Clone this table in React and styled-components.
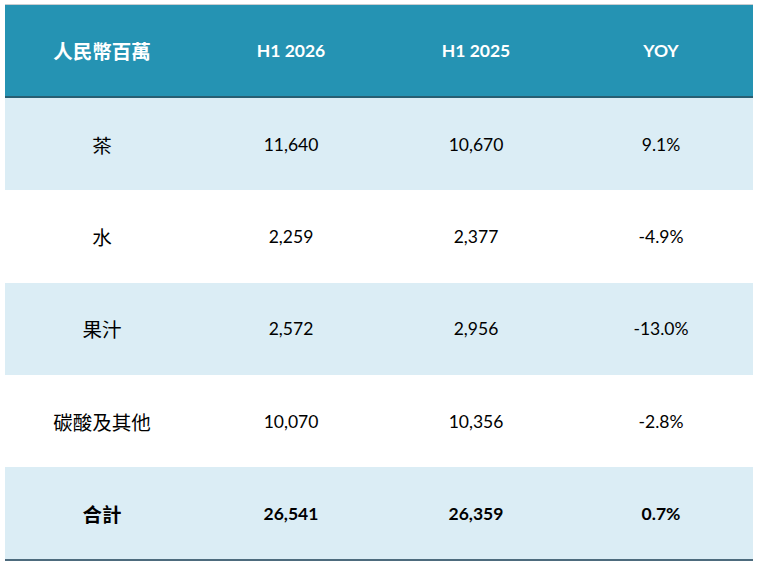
import React from "react";
import styled, { createGlobalStyle } from "styled-components";

const Global = createGlobalStyle`
  html, body { margin: 0; padding: 0; background: #ffffff; }
  body { font-family: Lato, "Noto Sans CJK TC", sans-serif; }
`;

const Page = styled.div`
  padding: 4px 0 0 5px;
`;

const Table = styled.div`
  width: 748px;
  border-top: 1px solid #c9cdd0;
  border-bottom: 2px solid #4d6b7d;
`;

const cols = "194px 184px 186px 184px";

const HeaderRow = styled.div`
  display: grid;
  grid-template-columns: ${cols};
  height: 91px;
  background: #2593b3;
  border-bottom: 2px solid #285f73;
`;

const Row = styled.div`
  display: grid;
  grid-template-columns: ${cols};
  height: 92.3px;
  background: ${(p) => (p.$shade ? "#dbedf5" : "#ffffff")};
`;

const Cell = styled.div`
  display: flex;
  align-items: center;
  justify-content: center;
  color: ${(p) => (p.$head ? "#ffffff" : "#000000")};
  font-weight: ${(p) => (p.$bold ? 700 : 400)};
  font-family: ${(p) =>
    p.$cjk
      ? '"Noto Sans CJK TC", "Noto Sans CJK SC", sans-serif'
      : 'Lato, "Noto Sans CJK TC", sans-serif'};
  font-size: ${(p) => (p.$cjk ? "19.5px" : "17.5px")};
  white-space: nowrap;
`;

const rows = [
  ["茶", "11,640", "10,670", "9.1%"],
  ["水", "2,259", "2,377", "-4.9%"],
  ["果汁", "2,572", "2,956", "-13.0%"],
  ["碳酸及其他", "10,070", "10,356", "-2.8%"],
];

export default function App() {
  return (
    <Page>
      <Global />
      <Table>
        <HeaderRow>
          <Cell $head $bold $cjk>人民幣百萬</Cell>
          <Cell $head $bold>H1 2026</Cell>
          <Cell $head $bold>H1 2025</Cell>
          <Cell $head $bold>YOY</Cell>
        </HeaderRow>
        {rows.map((r, i) => (
          <Row key={r[0]} $shade={i % 2 === 0}>
            <Cell $cjk>{r[0]}</Cell>
            <Cell>{r[1]}</Cell>
            <Cell>{r[2]}</Cell>
            <Cell>{r[3]}</Cell>
          </Row>
        ))}
        <Row $shade>
          <Cell $cjk $bold>合計</Cell>
          <Cell $bold>26,541</Cell>
          <Cell $bold>26,359</Cell>
          <Cell $bold>0.7%</Cell>
        </Row>
      </Table>
    </Page>
  );
}
